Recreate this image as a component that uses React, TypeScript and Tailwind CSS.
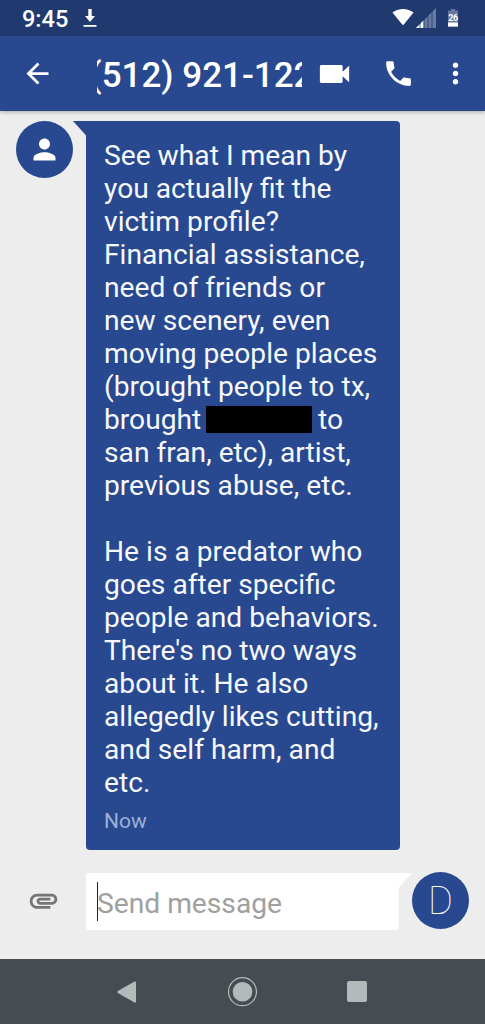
import type { ReactNode } from "react";

function Icon({ d, className }: { d: string; className: string }) {
  return (
    <svg viewBox="0 0 24 24" preserveAspectRatio="none" fill="currentColor" className={className}>
      <path d={d} />
    </svg>
  );
}

const icons = {
  back: "M20 11H7.83l5.59-5.59L12 4l-8 8 8 8 1.41-1.41L7.83 13H20v-2z",
  video: "M17 10.5V7c0-.55-.45-1-1-1H4c-.55 0-1 .45-1 1v10c0 .55.45 1 1 1h12c.55 0 1-.45 1-1v-3.5l4 4v-11l-4 4z",
  phone:
    "M6.62 10.79c1.44 2.83 3.76 5.14 6.59 6.59l2.2-2.2c.27-.27.67-.36 1.02-.24 1.12.37 2.33.57 3.57.57.55 0 1 .45 1 1V20c0 .55-.45 1-1 1-9.39 0-17-7.61-17-17 0-.55.45-1 1-1h3.5c.55 0 1 .45 1 1 0 1.25.2 2.45.57 3.57.11.35.03.74-.25 1.02l-2.2 2.2z",
  more: "M12 8c1.1 0 2-.9 2-2s-.9-2-2-2-2 .9-2 2 .9 2 2 2zm0 2c-1.1 0-2 .9-2 2s.9 2 2 2 2-.9 2-2-.9-2-2-2zm0 6c-1.1 0-2 .9-2 2s.9 2 2 2 2-.9 2-2-.9-2-2-2z",
  person:
    "M12 12c2.21 0 4-1.79 4-4s-1.79-4-4-4-4 1.79-4 4 1.79 4 4 4zm0 2c-2.67 0-8 1.34-8 4v2h16v-2c0-2.66-5.33-4-8-4z",
  attach:
    "M2 12.5C2 9.46 4.46 7 7.5 7H18c2.21 0 4 1.79 4 4s-1.79 4-4 4H9.5C8.12 15 7 13.88 7 12.5S8.12 10 9.5 10H17v2H9.41c-.55 0-.55 1 0 1H18c1.1 0 2-.9 2-2s-.9-2-2-2H7.5C5.57 9 4 10.57 4 12.5S5.57 16 7.5 16H17v2H7.5C4.46 18 2 15.54 2 12.5z",
};

function StatusBar() {
  return (
    <div className="flex h-9 items-start bg-[#203a70] text-white">
      <span className="ml-[22px] mt-[5px] w-[48px] whitespace-nowrap text-[23.5px] font-medium leading-7">9:45</span>
      <svg viewBox="0 0 14 18" className="ml-[13px] mt-[9px] h-[18px] w-[14px]" fill="currentColor">
        <path d="M5.3 0h3.400v7h3.300L7 13 2 7h3.300zM.5 16h13v1.700H.5z" />
      </svg>
      <div className="flex-1" />
      <svg viewBox="0 0 22 18" className="mt-[8px] h-[18px] w-[22px]" fill="currentColor">
        <path d="M.5 4.600C6.500-.3 15.500-.3 21.500 4.600L11.800 16.600Q11 17.500 10.200 16.600z" />
      </svg>
      <svg viewBox="0 0 20 20" className="ml-[2px] mt-[8px] h-[20px] w-[20px]">
        <path d="M0 20L20 0v20z" fill="#697ba2" />
        <path d="M0 20L7.500 12.500V20z" fill="#fff" />
        <path d="M4 14v6M8 10v10M12 6v14M16 2v18" stroke="#203a70" strokeWidth="0.8" />
      </svg>
      <div className="relative ml-[12px] mr-[27px] mt-[9px] h-[18px] w-[10px]">
        <svg viewBox="0 0 10 18" className="h-[18px] w-[10px]">
          <path d="M3 0h4v1.500h3V18H0V1.500h3z" fill="#64779f" />
          <path d="M0 13.500h10V17.500H0z" fill="#fff" />
        </svg>
        <span className="absolute left-0 top-[3px] w-[10px] text-center text-[9px] font-bold leading-[12px] tracking-[-0.5px]">26</span>
      </div>
    </div>
  );
}

function Toolbar() {
  return (
    <header className="relative z-10 flex h-[75px] items-center bg-[#28488f] text-white shadow-[0_1px_4px_rgba(0,0,0,0.3)]">
      <Icon d={icons.back} className="ml-[21px] h-[33px] w-[33px]" />
      <div className="ml-[43px] flex w-[205px] justify-center overflow-hidden pl-[4px] pt-[5px]">
        <h1 className="whitespace-nowrap text-[35px] font-medium leading-[48px]">(512) 921-122</h1>
      </div>
      <Icon d={icons.video} className="ml-[13px] h-[36px] w-[39px]" />
      <Icon d={icons.phone} className="ml-[28px] h-[33px] w-[33px]" />
      <Icon d={icons.more} className="ml-[24px] h-[33px] w-[33px]" />
    </header>
  );
}

function Line({ children }: { children: ReactNode }) {
  return <span className="flex h-[33px] items-center whitespace-pre">{children}</span>;
}

const opening = [
  "See what I mean by",
  "you actually fit the",
  "victim profile?",
  "Financial assistance,",
  "need of friends or",
  "new scenery, even",
  "moving people places",
  "(brought people to tx,",
];
const closing = [
  "He is a predator who",
  "goes after specific",
  "people and behaviors.",
  "There's no two ways",
  "about it. He also",
  "allegedly likes cutting,",
  "and self harm, and",
  "etc.",
];

function Message() {
  return (
    <div className="flex h-[729px] items-start pl-4">
      <div className="flex h-[57px] w-[57px] items-center justify-center rounded-full bg-[#28488f] text-white">
        <Icon d={icons.person} className="h-[33px] w-[33px]" />
      </div>
      <svg viewBox="0 0 14 16" className="h-[16px] w-[14px] shrink-0" fill="#28488f">
        <path d="M0 0h14v15.500z" />
      </svg>
      <div className="-ml-px h-[729px] w-[314px] rounded-[4px] rounded-tl-none bg-[#28488f] pl-[18px] pt-[18px] text-[28.2px] leading-[33px] text-[#f6f8fd]">
        {opening.map((t) => (
          <Line key={t}>{t}</Line>
        ))}
        <Line>
          <span className="w-[102px]">brought</span>
          <span className="mr-[6px] h-[27px] w-[106px] bg-black" />
          <span>to</span>
        </Line>
        <Line>san fran, etc), artist,</Line>
        <Line>previous abuse, etc.</Line>
        <div className="h-[33px]" />
        {closing.map((t) => (
          <Line key={t}>{t}</Line>
        ))}
        <div className="mt-[8px] text-[21px] leading-[28px] text-[#9fb0d8]">Now</div>
      </div>
    </div>
  );
}

function Composer() {
  return (
    <div className="mt-[21px] flex h-[58px] items-start">
      <Icon d={icons.attach} className="ml-[27px] mt-[13px] h-[33px] w-[33px] text-[#757575]" />
      <div className="ml-[26px] mt-[2px] flex h-[57px] w-[313px] items-center rounded-[3px] rounded-tr-none bg-white pl-[11px]">
        <div className="h-[39px] w-px bg-[#222]" />
        <span className="-ml-px mt-[3px] whitespace-nowrap text-[28.2px] leading-[33px] text-[#a0a0a0]">Send message</span>
      </div>
      <svg viewBox="0 0 14 16" className="-ml-px mt-[2px] h-[16px] w-[14px]" fill="#fff">
        <path d="M0 0h14L0 15.500z" />
      </svg>
      <div className="mt-px flex h-[57px] w-[57px] items-center justify-center rounded-full bg-[#28488f]">
        <span className="pt-[2px] text-[38px] font-thin leading-[55px] text-white">D</span>
      </div>
    </div>
  );
}

function NavBar() {
  return (
    <nav className="flex h-[65px] items-center bg-[#454d52] text-[#b4b9ba]">
      <svg viewBox="0 0 20 22" className="ml-[117px] h-[22px] w-[20px]" fill="currentColor">
        <path d="M17.500.5Q19 0 19 1.500v19q0 1.500-1.500 1L.8 11.900Q0 11 .8 10.100z" />
      </svg>
      <svg viewBox="0 0 30 30" className="ml-[90px] h-[30px] w-[30px]">
        <circle cx="15.500" cy="14.700" r="14" fill="none" stroke="currentColor" strokeWidth="1.200" />
        <circle cx="15.500" cy="14.700" r="9.800" fill="currentColor" />
      </svg>
      <div className="ml-[90px] h-[21px] w-[20px] rounded-[2px] bg-[#b4b9ba]" />
    </nav>
  );
}

export default function App() {
  return (
    <div className="flex h-[1024px] w-[485px] flex-col overflow-hidden bg-[#ededed] font-['Roboto',sans-serif]">
      <StatusBar />
      <Toolbar />
      <main className="flex-1 pt-[10px]">
        <Message />
        <Composer />
      </main>
      <NavBar />
    </div>
  );
}
